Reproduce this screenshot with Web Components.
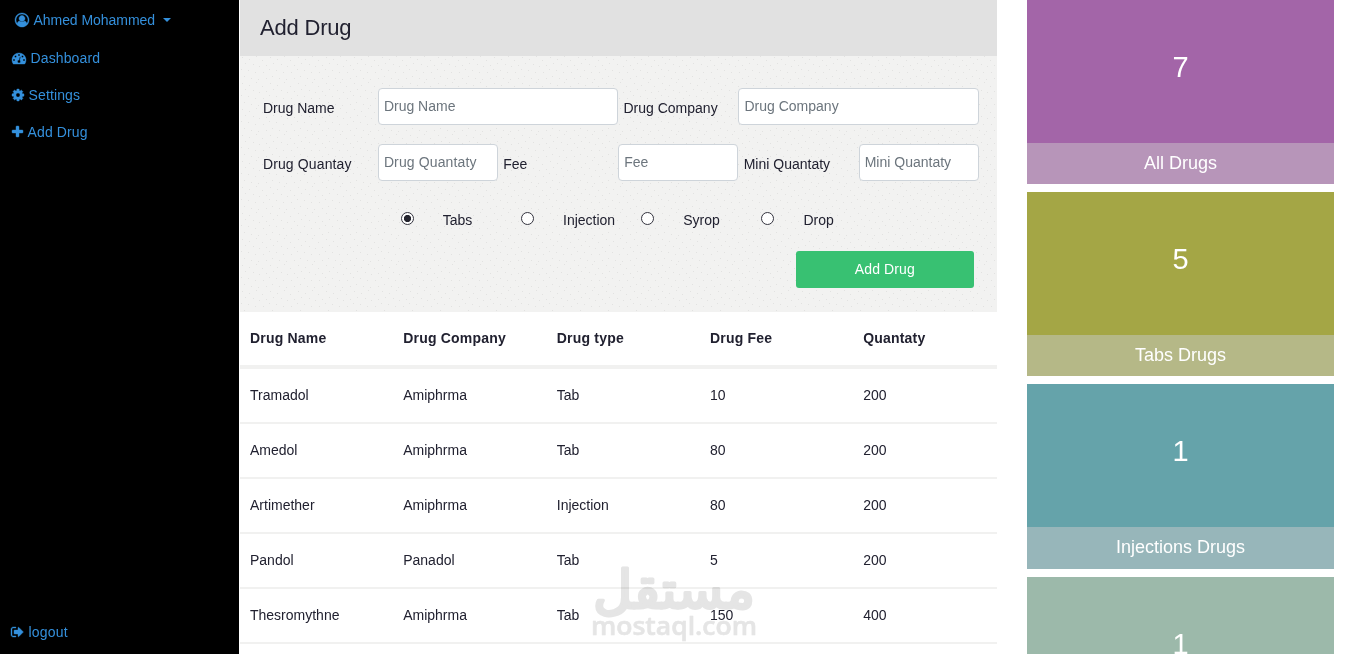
<!DOCTYPE html>
<html lang="en">
<head>
<meta charset="utf-8">
<title>Add Drug</title>
<style>
  body {
    margin: 0;
    height: 654px;
    overflow: hidden;
    background: #fff;
    color: #212130;
    font-family: "Liberation Sans", Arial, sans-serif;
    font-size: 14px;
  }
</style>
</head>
<body>
<pharmacy-app></pharmacy-app>

<script>
  // the icon paths are drawn on a 1792 unit grid with the y axis pointing up
  const icon = (width, path) => `
    <svg width="${width}" height="14" viewBox="0 0 ${width * 128} 1792">
      <path fill-rule="evenodd" transform="matrix(1 0 0 -1 0 1536)" d="${path}"/>
    </svg>`;

  const icons = {
    user: icon(14, 'M896 1536q182 0 348 -71t286 -191t191 -286t71 -348q0 -181 -70.5 -347t-190.5 -286t-286 -191.5t-349 -71.5t-349 71t-285.5 191.5t-190.5 286t-71 347.5t71 348t191 286t286 191t348 71zM1515 185q149 205 149 455q0 156 -61 298t-164 245t-245 164t-298 61t-298 -61t-245 -164t-164 -245t-61 -298q0 -250 149 -455q66 327 306 327q131 -128 313 -128t313 128q240 0 306 -327zM1280 832q0 159 -112.5 271.5t-271.5 112.5t-271.5 -112.5t-112.5 -271.5t112.5 -271.5t271.5 -112.5t271.5 112.5t112.5 271.5z'),
    dashboard: icon(14, 'M384 384q0 53 -37.5 90.5t-90.5 37.5t-90.5 -37.5t-37.5 -90.5t37.5 -90.5t90.5 -37.5t90.5 37.5t37.5 90.5zM576 832q0 53 -37.5 90.5t-90.5 37.5t-90.5 -37.5t-37.5 -90.5t37.5 -90.5t90.5 -37.5t90.5 37.5t37.5 90.5zM1004 351l101 382q6 26 -7.5 48.5t-38.5 29.5t-48 -6.5t-30 -39.5l-101 -382q-60 -5 -107 -43.5t-63 -98.5q-20 -77 20 -146t117 -89t146 20t89 117q16 60 -6 117t-72 91zM1664 384q0 53 -37.5 90.5t-90.5 37.5t-90.5 -37.5t-37.5 -90.5t37.5 -90.5t90.5 -37.5t90.5 37.5t37.5 90.5zM1024 1024q0 53 -37.5 90.5t-90.5 37.5t-90.5 -37.5t-37.5 -90.5t37.5 -90.5t90.5 -37.5t90.5 37.5t37.5 90.5zM1472 832q0 53 -37.5 90.5t-90.5 37.5t-90.5 -37.5t-37.5 -90.5t37.5 -90.5t90.5 -37.5t90.5 37.5t37.5 90.5zM1792 384q0 -261 -141 -483q-19 -29 -54 -29h-1402q-35 0 -54 29q-141 221 -141 483q0 182 71 348t191 286t286 191t348 71t348 -71t286 -191t191 -286t71 -348z'),
    gear: icon(12, 'M1024 640q0 -106 -75 -181t-181 -75t-181 75t-75 181t75 181t181 75t181 -75t75 -181zM1536 749v-222q0 -12 -8 -23t-20 -13l-185 -28q-19 -54 -39 -91q35 -50 107 -138q10 -12 10 -25t-9 -23q-27 -37 -99 -108t-94 -71q-12 0 -26 9l-138 108q-44 -23 -91 -38q-16 -136 -29 -186q-7 -28 -36 -28h-222q-14 0 -24.5 8.5t-11.5 21.5l-28 184q-49 16 -90 37l-141 -107q-10 -9 -25 -9q-14 0 -25 11q-126 114 -165 168q-7 10 -7 23q0 12 8 23q15 21 51 66.5t54 70.5q-27 50 -41 99l-183 27q-13 2 -21 12.5t-8 23.5v222q0 12 8 23t19 13l186 28q14 46 39 92q-40 57 -107 138q-10 12 -10 24q0 10 9 23q26 36 98.5 107.5t94.5 71.5q13 0 26 -10l138 -107q44 23 91 38q16 136 29 186q7 28 36 28h222q14 0 24.5 -8.5t11.5 -21.5l28 -184q49 -16 90 -37l142 107q9 9 24 9q13 0 25 -10q129 -119 165 -170q7 -8 7 -22q0 -12 -8 -23q-15 -21 -51 -66.5t-54 -70.5q26 -50 41 -98l183 -28q13 -2 21 -12.5t8 -23.5z'),
    plus: icon(11, 'M1408 800v-192q0 -40 -28 -68t-68 -28h-416v-416q0 -40 -28 -68t-68 -28h-192q-40 0 -68 28t-28 68v416h-416q-40 0 -68 28t-28 68v192q0 40 28 68t68 28h416v416q0 40 28 68t68 28h192q40 0 68 -28t28 -68v-416h416q40 0 68 -28t28 -68z'),
    logout: icon(13, 'M640 96q0 -4 1 -20t.5 -26.5t-3 -23.5t-10 -19.5t-20.5 -6.5h-320q-119 0 -203.5 84.5t-84.5 203.5v704q0 119 84.5 203.5t203.5 84.5h320q13 0 22.5 -9.5t9.5 -22.5q0 -4 1 -20t.5 -26.5t-3 -23.5t-10 -19.5t-20.5 -6.5h-320q-66 0 -113 -47t-47 -113v-704q0 -66 47 -113t113 -47h312q32 0 40 -32zM1568 640q0 -26 -19 -45l-544 -544q-19 -19 -45 -19t-45 19t-19 45v288h-448q-26 0 -45 19t-19 45v384q0 26 19 45t45 19h448v288q0 26 19 45t45 19t45 -19l544 -544q19 -19 19 -45z')
  };

  class NavLink extends HTMLElement {
    constructor() {
      super();
      this.attachShadow({ mode: 'open' });
      this.shadowRoot.innerHTML = `
      <style>
        :host {
          display: flex;
          align-items: center;
          height: 37px;
          padding-left: 12px;
          color: #3490dc;
        }
        svg {
          display: block;
          fill: currentColor;
          stroke: currentColor;
          stroke-width: 50px;
          margin-right: 4.500px;
          overflow: visible;
        }
        .caret {
          border: 4px solid transparent;
          border-top-color: currentColor;
          border-bottom: 0;
          margin: -1px 0 0 8px;
        }
      </style>
      ${icons[this.getAttribute('icon')]}
      <slot></slot>
      ${this.hasAttribute('caret') ? '<span class="caret"></span>' : ''}
      `;
    }
  }

  class SideBar extends HTMLElement {
    constructor() {
      super();
      this.attachShadow({ mode: 'open' });
      this.shadowRoot.innerHTML = `
      <style>
        :host {
          display: flex;
          flex-direction: column;
          justify-content: space-between;
          box-sizing: border-box;
          height: 654px;
          padding: 1px 0 4px;
          background: #000;
        }
        .user {
          height: 38px;
          padding-left: 15px;
          letter-spacing: -.05px;
        }
        .spaced {
          letter-spacing: .13px;
        }
        .logout {
          padding-left: 11px;
          letter-spacing: .2px;
        }
      </style>
      <nav>
        <nav-link class="user" icon="user" caret>Ahmed Mohammed</nav-link>
        <nav-link class="spaced" icon="dashboard">Dashboard</nav-link>
        <nav-link class="spaced" icon="gear">Settings</nav-link>
        <nav-link class="spaced" icon="plus">Add Drug</nav-link>
      </nav>
      <nav-link class="logout" icon="logout">logout</nav-link>
      `;
    }
  }

  // one tile of the form's speckled background
  const specks = [
    [2, 1], [9, 3], [16, 0], [22, 4], [5, 7], [13, 8], [19, 10], [26, 9],
    [1, 13], [8, 14], [15, 16], [23, 16], [4, 20], [11, 22], [18, 23], [26, 22]
  ];

  class DrugForm extends HTMLElement {
    constructor() {
      super();
      this.attachShadow({ mode: 'open' });
      const types = ['Tabs', 'Injection', 'Syrop', 'Drop'];
      this.shadowRoot.innerHTML = `
      <style>
        :host {
          display: block;
          height: 312px;
        }
        h1 {
          margin: 0;
          height: 56px;
          padding-left: 20px;
          background: #e1e1e1;
          font-size: 22px;
          font-weight: 400;
          letter-spacing: -.2px;
          line-height: 55px;
        }
        form {
          display: grid;
          grid-template-columns: repeat(12, 1fr);
          grid-template-rows: 37px 37px 37px 37px;
          row-gap: 19px;
          box-sizing: border-box;
          height: 256px;
          padding: 32px 18.300px 0 17.500px;
          background-color: #f2f2f1;
          background-image: ${specks.map(([x, y]) =>
            `radial-gradient(circle at ${x + .5}px ${y + .5}px, #e2e2e1 .6px, transparent 1px)`).join(',')};
          background-size: 28px 26px;
        }
        label {
          grid-column: span 2;
          padding-left: 5.400px;
          line-height: 40px;
        }
        .quantity {
          letter-spacing: .13px;
        }
        input.text {
          grid-column: span 2;
          box-sizing: border-box;
          width: 100%;
          min-width: 0;
          height: 37px;
          padding: 0 5.200px 2px;
          border: 1px solid #ced4da;
          border-radius: 4px;
          background: #fff;
          font: inherit;
        }
        input.wide {
          grid-column: span 4;
        }
        input::placeholder {
          color: #6c757d;
          opacity: 1;
        }
        .quantity + input {
          letter-spacing: .13px;
        }
        .type {
          grid-column: span 1;
          padding-left: 5px;
          white-space: nowrap;
        }
        .first {
          grid-column: 3;
        }
        .radio {
          appearance: none;
          box-sizing: border-box;
          width: 13px;
          height: 13px;
          margin: 12px 1px 0 0;
          justify-self: center;
          border: 1px solid #34343f;
          border-radius: 50%;
          background: #fff;
        }
        .radio:checked {
          background: radial-gradient(circle, #25252f 3.300px, #fff 3.900px);
        }
        button {
          grid-column: 10 / 13;
          height: 37px;
          margin: -5px 5px 0 -2.400px;
          padding: 0 0 1px;
          border: 0;
          border-radius: 3px;
          background: #38c172;
          color: #fff;
          font: inherit;
          letter-spacing: .13px;
        }
      </style>
      <h1>Add Drug</h1>
      <form>
        <label>Drug Name</label>
        <input class="text wide" placeholder="Drug Name">
        <label>Drug Company</label>
        <input class="text wide" placeholder="Drug Company">
        <label class="quantity">Drug Quantay</label>
        <input class="text" placeholder="Drug Quantaty">
        <label>Fee</label>
        <input class="text" placeholder="Fee">
        <label>Mini Quantaty</label>
        <input class="text" placeholder="Mini Quantaty">
        ${types.map((type, i) => `
        <input type="radio" name="type" class="radio ${i ? '' : 'first'}" ${i ? '' : 'checked'}>
        <label class="type">${type}</label>`).join('')}
        <button type="button">Add Drug</button>
      </form>
      `;
    }
  }

  class DrugTable extends HTMLElement {
    constructor() {
      super();
      this.attachShadow({ mode: 'open' });
      const rows = [
        ['Tramadol', 'Amiphrma', 'Tab', 10, 200],
        ['Amedol', 'Amiphrma', 'Tab', 80, 200],
        ['Artimether', 'Amiphrma', 'Injection', 80, 200],
        ['Pandol', 'Panadol', 'Tab', 5, 200],
        ['Thesromythne', 'Amiphrma', 'Tab', 150, 400],
        ['', '', '', '', '']
      ];
      this.shadowRoot.innerHTML = `
      <style>
        :host {
          display: block;
          overflow: hidden;
        }
        table {
          width: 766px;
          table-layout: fixed;
          border-collapse: separate;
          border-spacing: 0;
        }
        th, td {
          box-sizing: border-box;
          height: 55px;
          padding: 0 10px 2px;
          border-bottom: 2px solid #f1f1f0;
          text-align: left;
        }
        th:nth-child(n+3), td:nth-child(n+3) {
          padding-left: 10.400px;
        }
        th {
          height: 57px;
          border-bottom-width: 4px;
          letter-spacing: .2px;
        }
      </style>
      <table>
        <thead>
          <tr><th>Drug Name</th><th>Drug Company</th><th>Drug type</th><th>Drug Fee</th><th>Quantaty</th></tr>
        </thead>
        <tbody>
          ${rows.map(row => `<tr>${row.map(cell => `<td>${cell}</td>`).join('')}</tr>`).join('')}
        </tbody>
      </table>
      `;
    }
  }

  class CountCard extends HTMLElement {
    constructor() {
      super();
      this.attachShadow({ mode: 'open' });
      this.shadowRoot.innerHTML = `
      <style>
        :host {
          display: block;
          height: 184.200px;
          background: var(--card);
          color: #fff;
          text-align: center;
        }
        .count {
          height: 143px;
          font-size: 29px;
          line-height: 134.400px;
        }
        .name {
          height: 41.200px;
          background: var(--strip);
          font-size: 18px;
          line-height: 41.400px;
        }
      </style>
      <div class="count">${this.getAttribute('count')}</div>
      <div class="name"><slot></slot></div>
      `;
    }
  }

  class MostaqlMark extends HTMLElement {
    constructor() {
      super();
      this.attachShadow({ mode: 'open' });
      this.shadowRoot.innerHTML = `
      <style>
        :host {
          position: absolute;
          left: 590px;
          top: 560px;
          width: 170px;
          height: 90px;
          pointer-events: none;
          mix-blend-mode: multiply;
        }
        svg {
          display: block;
        }
        text {
          fill: #e5e5e5;
          stroke: #e5e5e5;
          stroke-linejoin: round;
          stroke-linecap: round;
        }
        .arabic {
          font-family: "DejaVu Sans", sans-serif;
          font-size: 52px;
          stroke-width: 3px;
        }
        .latin {
          font-family: "Open Sans", sans-serif;
          font-size: 26px;
          font-weight: 600;
          stroke-width: .6px;
        }
      </style>
      <svg width="170" height="90" viewBox="0 0 170 90">
        <text class="arabic" x="84" y="48" text-anchor="middle" textLength="162" lengthAdjust="spacingAndGlyphs">مستقل</text>
        <text class="latin" x="1" y="75" textLength="166" lengthAdjust="spacingAndGlyphs">mostaql.com</text>
      </svg>
      `;
    }
  }

  class PharmacyApp extends HTMLElement {
    constructor() {
      super();
      this.attachShadow({ mode: 'open' });
      this.shadowRoot.innerHTML = `
      <style>
        :host {
          display: grid;
          grid-template-columns: 239px 757px 307px;
          justify-content: start;
          height: 654px;
          overflow: hidden;
        }
        main {
          margin: 0 -1px 0 1px;
        }
        aside {
          display: flex;
          flex-direction: column;
          gap: 8px;
          margin: 0 -31px 0 31px;
        }
        count-card {
          flex: none;
        }
      </style>
      <side-bar></side-bar>
      <main>
        <drug-form></drug-form>
        <drug-table></drug-table>
      </main>
      <aside>
        <count-card count="7" style="--card: #a365a8; --strip: #b795b9">All Drugs</count-card>
        <count-card count="5" style="--card: #a4a645; --strip: #b5b887">Tabs Drugs</count-card>
        <count-card count="1" style="--card: #65a3aa; --strip: #97b6ba">Injections Drugs</count-card>
        <count-card count="1" style="--card: #9cb9aa; --strip: #b5c8be">Syrop Drugs</count-card>
      </aside>
      <mostaql-mark></mostaql-mark>
      `;
    }
  }

  customElements.define('nav-link', NavLink);
  customElements.define('side-bar', SideBar);
  customElements.define('drug-form', DrugForm);
  customElements.define('drug-table', DrugTable);
  customElements.define('count-card', CountCard);
  customElements.define('mostaql-mark', MostaqlMark);
  customElements.define('pharmacy-app', PharmacyApp);
</script>
</body>
</html>
